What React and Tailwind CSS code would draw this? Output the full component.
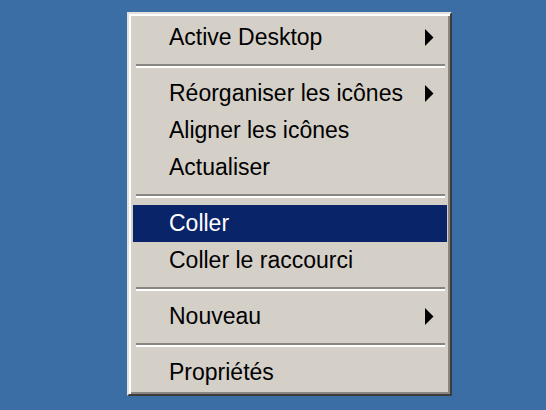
import React from "react";

const Arrow = () => (
  <svg width="10" height="17" viewBox="0 0 10 17" className="block">
    <path d="M1 0 L9.5 8.5 L1 17 Z" fill="#000" />
  </svg>
);

const Item = ({ label, sub, active }) => (
  <div
    className={
      "flex h-[37px] items-center justify-between pl-[36px] pr-[13px] " +
      (active ? "bg-[#0a246a] text-white" : "text-black")
    }
  >
    <span className="leading-none">{label}</span>
    {sub ? <Arrow /> : null}
  </div>
);

const Sep = ({ h = "h-[19px]" }) => (
  <div className={"flex flex-col pl-[3px] pr-[2px] pt-[8px] " + h}>
    <div className="h-[2px] bg-[#8a8782]" />
    <div className="h-[2px] bg-white" />
  </div>
);

export default function App() {
  return (
    <div className="h-[410px] w-[546px] overflow-hidden bg-[#3a6ea5] pl-[127px] pt-[12px]">
      <div
        className="box-border h-[384px] w-[325px] border-2 border-t-[#e4e1dc] border-l-[#e4e1dc] border-r-[#3c3c3c] border-b-[#3c3c3c] bg-[#d4d0c8] pt-[4.5px] pl-[4px] pr-[3px] shadow-[inset_2px_2px_0_#ffffff,inset_-2px_-2px_0_#8a8782] text-[23px]"
        style={{ fontFamily: '"Liberation Sans", Arial, sans-serif' }}
      >
        <div className="flex flex-col">
          <Item label="Active Desktop" sub />
          <Sep h="h-[19.5px]" />
          <Item label="Réorganiser les icônes" sub />
          <Item label="Aligner les icônes" />
          <Item label="Actualiser" />
          <Sep />
          <Item label="Coller" active />
          <Item label="Coller le raccourci" />
          <Sep />
          <Item label="Nouveau" sub />
          <Sep />
          <Item label="Propriétés" />
        </div>
      </div>
    </div>
  );
}
